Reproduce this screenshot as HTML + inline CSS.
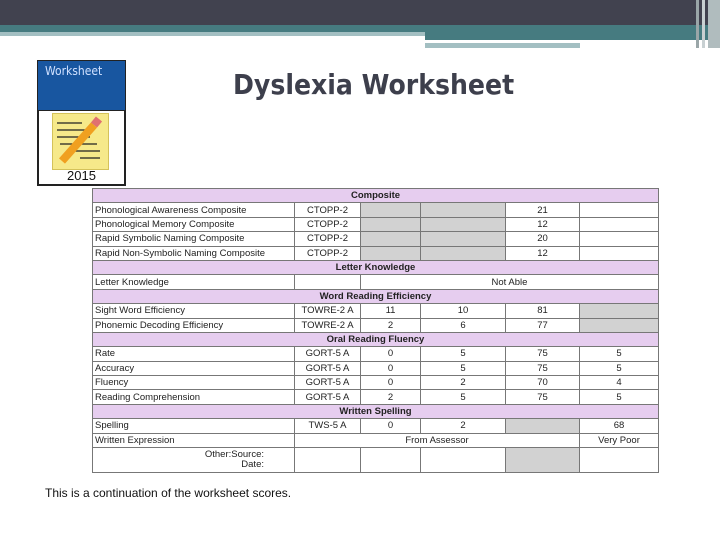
<!DOCTYPE html>
<html><head><style>
body{margin:0;width:720px;height:540px;position:relative;background:#fff;overflow:hidden;font-family:"Liberation Sans",sans-serif}
.a{position:absolute}
table{position:absolute;left:92px;top:188px;border-collapse:collapse;font-size:9.5px;color:#222}
td{border:1px solid #777;height:13.4px;padding:0 2px;text-align:center;white-space:nowrap;line-height:11px}
td.l{text-align:left}
.h td{background:#e6cdef;font-weight:bold}
.g{background:#d2d2d2}
</style></head><body>
<div class="a" style="left:0;top:0;width:720px;height:25px;background:#41424f"></div>
<div class="a" style="left:0;top:25px;width:720px;height:7px;background:#467b80"></div>
<div class="a" style="left:0;top:32px;width:425px;height:4px;background:#a3bfc2"></div>
<div class="a" style="left:425px;top:32px;width:295px;height:8px;background:#467b80"></div>
<div class="a" style="left:425px;top:43px;width:155px;height:5px;background:#a3bfc2"></div>
<div class="a" style="left:696px;top:0;width:3px;height:48px;background:#9aa6a8"></div>
<div class="a" style="left:702px;top:0;width:3px;height:48px;background:#c8d0d2"></div>
<div class="a" style="left:708px;top:0;width:12px;height:48px;background:#b0bcbe"></div>
<div class="a" style="left:37px;top:60px;width:89px;height:51px;background:#1856a0;border:1px solid #222;box-sizing:border-box;color:#cfe0ff;font-size:12px;padding:3px 0 0 7px;font-family:'DejaVu Sans Condensed','DejaVu Sans',sans-serif">Worksheet</div>
<div class="a" style="left:37px;top:111px;width:89px;height:75px;border:2px solid #222;border-top:none;box-sizing:border-box"></div>
<div class="a" style="left:52px;top:113px;width:55px;height:55px;background:#f6e98a;border:1px solid #d4c25a"></div>
<svg class="a" style="left:52px;top:113px" width="55" height="55"><g stroke="#222" stroke-width="1.2"><line x1="5" y1="10" x2="30" y2="10"/><line x1="5" y1="17" x2="35" y2="17"/><line x1="5" y1="24" x2="38" y2="24"/><line x1="8" y1="31" x2="45" y2="31"/><line x1="20" y1="38" x2="48" y2="38"/><line x1="28" y1="45" x2="48" y2="45"/></g><line x1="10" y1="48" x2="42" y2="12" stroke="#f0a020" stroke-width="8"/><line x1="42" y1="12" x2="47" y2="6" stroke="#e07070" stroke-width="8"/></svg>
<div class="a" style="left:37px;top:168px;width:89px;text-align:center;font-size:13px;color:#111">2015</div>
<div class="a" style="left:233px;top:68px;font-size:28px;font-weight:bold;font-family:'DejaVu Sans Condensed','DejaVu Sans',sans-serif;color:#3d3f4c">Dyslexia Worksheet</div>
<table>
<colgroup><col style="width:202px"><col style="width:66px"><col style="width:60px"><col style="width:85px"><col style="width:74px"><col style="width:79px"></colgroup>
<tr class="h"><td colspan="6">Composite</td></tr>
<tr><td class="l">Phonological Awareness Composite</td><td>CTOPP-2</td><td class="g"></td><td class="g"></td><td>21</td><td></td></tr>
<tr><td class="l">Phonological Memory Composite</td><td>CTOPP-2</td><td class="g"></td><td class="g"></td><td>12</td><td></td></tr>
<tr><td class="l">Rapid Symbolic Naming Composite</td><td>CTOPP-2</td><td class="g"></td><td class="g"></td><td>20</td><td></td></tr>
<tr><td class="l">Rapid Non-Symbolic Naming Composite</td><td>CTOPP-2</td><td class="g"></td><td class="g"></td><td>12</td><td></td></tr>
<tr class="h"><td colspan="6">Letter Knowledge</td></tr>
<tr><td class="l">Letter Knowledge</td><td></td><td colspan="4">Not Able</td></tr>
<tr class="h"><td colspan="6">Word Reading Efficiency</td></tr>
<tr><td class="l">Sight Word Efficiency</td><td>TOWRE-2 A</td><td>11</td><td>10</td><td>81</td><td class="g"></td></tr>
<tr><td class="l">Phonemic Decoding Efficiency</td><td>TOWRE-2 A</td><td>2</td><td>6</td><td>77</td><td class="g"></td></tr>
<tr class="h"><td colspan="6">Oral Reading Fluency</td></tr>
<tr><td class="l">Rate</td><td>GORT-5 A</td><td>0</td><td>5</td><td>75</td><td>5</td></tr>
<tr><td class="l">Accuracy</td><td>GORT-5 A</td><td>0</td><td>5</td><td>75</td><td>5</td></tr>
<tr><td class="l">Fluency</td><td>GORT-5 A</td><td>0</td><td>2</td><td>70</td><td>4</td></tr>
<tr><td class="l">Reading Comprehension</td><td>GORT-5 A</td><td>2</td><td>5</td><td>75</td><td>5</td></tr>
<tr class="h"><td colspan="6">Written Spelling</td></tr>
<tr><td class="l">Spelling</td><td>TWS-5 A</td><td>0</td><td>2</td><td class="g"></td><td>68</td></tr>
<tr><td class="l">Written Expression</td><td colspan="4">From Assessor</td><td>Very Poor</td></tr>
<tr><td style="height:24px;text-align:right;padding-right:30px;line-height:10px">Other:Source:<br>Date:</td><td></td><td></td><td></td><td class="g"></td><td></td></tr>
</table>
<div class="a" style="left:45px;top:486px;font-size:12px;color:#111">This is a continuation of the worksheet scores.</div>
</body></html>
